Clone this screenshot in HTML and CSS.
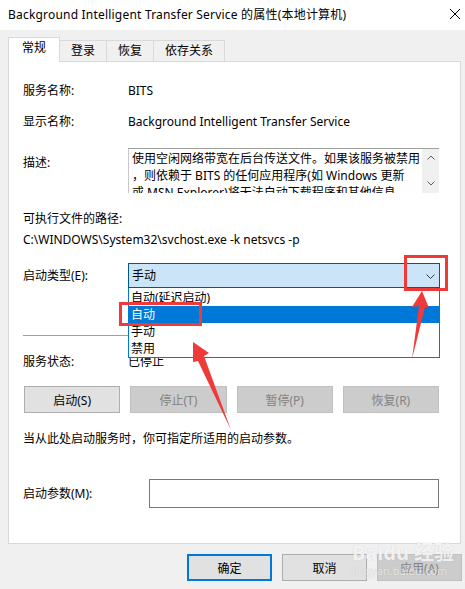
FILE: index.html
```html
<!DOCTYPE html>
<html lang="zh-CN">
<head>
    <meta charset="UTF-8">
    <title>BITS 的属性</title>
    <link rel="stylesheet" href="styles.css">
</head>
<body>
    <div class="window">

        <!-- Title bar -->
        <header class="titlebar">
            <span class="title">Background Intelligent Transfer Service 的属性(本地计算机)</span>
            <svg class="close" width="12" height="12" viewBox="0 0 12 12">
                <path d="M1 1 L11 11 M11 1 L1 11" stroke="#000" stroke-width="1" fill="none"/>
            </svg>
        </header>

        <div class="dialog">
            <nav class="tabs">
                <span class="tab active">常规</span>
                <span class="tab">登录</span>
                <span class="tab">恢复</span>
                <span class="tab">依存关系</span>
            </nav>

            <section class="panel">
                <div class="row row-name">
                    <span class="label">服务名称:</span>
                    <span>BITS</span>
                </div>
                <div class="row row-display">
                    <span class="label">显示名称:</span>
                    <span>Background Intelligent Transfer Service</span>
                </div>
                <div class="row row-desc">
                    <span class="label label-top">描述:</span>
                    <div class="textbox">
                        <div class="textbox-text">
                            使用空闲网络带宽在后台传送文件。如果该服务被禁用<br>
                            ，则依赖于 BITS 的任何应用程序(如 Windows 更新<br>
                            或 MSN Explorer)将无法自动下载程序和其他信息
                        </div>
                        <div class="scrollbar">
                            <svg width="8" height="5" viewBox="0 0 8 5"><polyline points="0.5,4.5 4,1 7.5,4.5" fill="none" stroke="#606060"/></svg>
                            <svg width="8" height="5" viewBox="0 0 8 5"><polyline points="0.5,0.5 4,4 7.5,0.5" fill="none" stroke="#606060"/></svg>
                        </div>
                    </div>
                </div>
                <div class="path-label">可执行文件的路径:</div>
                <div class="path-value">C:\WINDOWS\System32\svchost.exe -k netsvcs -p</div>

                <div class="row row-startup">
                    <span class="label">启动类型(E):</span>
                    <div class="combo-wrap">
                        <div class="combo">
                            <span>手动</span>
                            <svg width="9" height="5" viewBox="0 0 9 5"><polyline points="0.5,0.5 4.5,4.5 8.5,0.5" fill="none" stroke="#3c3c3c"/></svg>
                        </div>
                        <ul class="dropdown">
                            <li>自动(延迟启动)</li>
                            <li class="selected">自动</li>
                            <li>手动</li>
                            <li>禁用</li>
                        </ul>
                    </div>
                </div>

                <div class="separator"></div>

                <div class="row row-status">
                    <span class="label">服务状态:</span>
                    <span>已停止</span>
                </div>

                <div class="service-buttons">
                    <button class="btn">启动(S)</button>
                    <button class="btn" disabled>停止(T)</button>
                    <button class="btn" disabled>暂停(P)</button>
                    <button class="btn" disabled>恢复(R)</button>
                </div>

                <p class="note">当从此处启动服务时，你可指定所适用的启动参数。</p>

                <div class="row row-params">
                    <span class="label label-wide">启动参数(M):</span>
                    <div class="param-input"></div>
                </div>
            </section>

            <footer class="actions">
                <button class="btn btn-default">确定</button>
                <button class="btn">取消</button>
                <button class="btn" disabled>应用(A)</button>
            </footer>
        </div>

        <!-- Watermark -->
        <div class="watermark">
            <span class="wm-big">Bai<span class="wm-du">du</span> 经验</span>
            <span class="wm-small">jingyan.baidu.com</span>
        </div>

        <!-- Red annotations drawn over the dialog -->
        <svg class="annotations" width="465" height="589" viewBox="0 0 465 589">
            <rect x="120.5" y="303.5" width="80" height="21" fill="none" stroke="#f03a3a" stroke-width="3"/>
            <rect x="405.5" y="256.5" width="41" height="33" fill="none" stroke="#f03a3a" stroke-width="3"/>
            <polygon points="422,291 429,308 425,307 412,359 419,306 412,307" fill="#f03a3a"/>
            <polygon points="193,342 209,353 204,356 231,430 198,361 193,362" fill="#f03a3a"/>
        </svg>
    </div>
</body>
</html>
```

FILE: styles.css
```css
/* Base */
* {
    margin: 0;
    padding: 0;
    box-sizing: border-box;
}

html, body {
    width: 465px;
    height: 589px;
    overflow: hidden;
    background: #f0f0f0;
    font-family: "Noto Sans", "Noto Sans CJK SC", sans-serif;
    font-size: 12px;
    color: #000;
}

.window {
    position: relative;
    width: 465px;
    height: 589px;
}

/* Title bar */
.titlebar {
    height: 30px;
    background: #fff;
    display: flex;
    align-items: center;
    justify-content: space-between;
    padding: 0 4px 2px 8px;
}

.title {
    font-size: 12px;
    letter-spacing: 0.2px;
}

/* Dialog */
.dialog {
    padding: 7px 4px 0 8px;
}

.tabs {
    display: flex;
    align-items: flex-end;
    height: 24px;
}

.tab {
    height: 21px;
    line-height: 19px;
    padding: 0 11px;
    border: 1px solid #d9d9d9;
    border-left: none;
    border-bottom: none;
    background: #f0f0f0;
}

.tab.active {
    height: 25px;
    line-height: 19px;
    padding: 0 13px;
    border-left: 1px solid #d9d9d9;
    background: #fff;
    margin-bottom: -1px;
    position: relative;
    z-index: 1;
}

.panel {
    background: #fff;
    border: 1px solid #d9d9d9;
    padding: 0 21px 35px 14px;
}

.row {
    display: flex;
    align-items: center;
    line-height: 18px;
}

.label {
    width: 105px;
    flex-shrink: 0;
}

.label-top {
    align-self: flex-start;
    margin-top: 6px;
}

.label-wide {
    width: 126px;
}

.row-name { margin-top: 20px; }
.row-display { margin-top: 13px; }
.row-desc { margin-top: 17px; }

.textbox {
    flex: 1;
    height: 45px;
    border-top: 1px solid #a0a0a0;
    border-left: 1px solid #c8c8c8;
    display: flex;
    overflow: hidden;
}

.textbox-text {
    flex: 1;
    padding: 1px 0 0 3px;
    line-height: 17px;
    white-space: nowrap;
    overflow: hidden;
}

.scrollbar {
    width: 17px;
    background: #f0f0f0;
    display: flex;
    flex-direction: column;
    justify-content: space-between;
    align-items: center;
    padding: 6px 0 7px;
}

.path-label {
    margin-top: 17px;
    line-height: 18px;
}

.path-value {
    margin-top: 3px;
    line-height: 18px;
}

.row-startup { margin-top: 14px; }

.combo-wrap {
    flex: 1;
    position: relative;
    margin-right: -1px;
}

.combo {
    height: 25px;
    background: #cce4f7;
    border: 1px solid #005499;
    display: flex;
    align-items: center;
    justify-content: space-between;
    padding: 0 4px 0 3px;
}

.combo svg {
    margin-top: 1px;
}

/* Open list of the combo box, lies over the page */
.dropdown {
    position: absolute;
    top: 25px;
    left: 0;
    right: 0;
    list-style: none;
    background: #fff;
    border: 1px solid #0078d7;
    border-top: none;
    z-index: 2;
}

.dropdown li {
    height: 17px;
    line-height: 17px;
    padding-left: 2px;
}

.dropdown li:first-child {
    margin-top: 1px;
}

.dropdown li.selected {
    background: #0078d7;
    color: #fff;
}

.separator {
    margin-top: 47px;
    border-top: 1px solid #a0a0a0;
}

.row-status { margin-top: 17px; }

.service-buttons {
    margin-top: 15px;
    margin-left: 1px;
    display: grid;
    grid-template-columns: repeat(4, 1fr);
    column-gap: 10px;
}

.btn {
    height: 27px;
    font-family: inherit;
    font-size: 12px;
    color: #000;
    background: #e1e1e1;
    border: 1px solid #adadad;
}

.btn:disabled {
    background: #cccccc;
    border-color: #bfbfbf;
    color: #838383;
}

.note {
    margin-top: 17px;
    line-height: 18px;
}

.row-params { margin-top: 31px; }

.param-input {
    flex: 1;
    height: 29px;
    border: 1px solid #7a7a7a;
}

.actions {
    margin-top: 10px;
    display: flex;
    justify-content: flex-end;
    gap: 10px;
    margin-right: -1px;
}

.actions .btn {
    width: 85px;
}

.btn-default {
    border: 2px solid #0078d7;
}

/* Overlays */
.watermark {
    position: absolute;
    left: 352px;
    top: 541px;
    display: flex;
    flex-direction: column;
    color: rgba(255, 255, 255, 0.8);
    text-shadow: 0 0 1px rgba(160, 160, 160, 0.5);
    pointer-events: none;
    z-index: 3;
}

.wm-big {
    font-size: 20px;
    font-weight: bold;
    line-height: 24px;
}

.wm-small {
    font-size: 11px;
    line-height: 12px;
    color: rgba(255, 255, 255, 0.6);
}

.annotations {
    position: absolute;
    top: 0;
    left: 0;
    pointer-events: none;
    z-index: 4;
}
```
